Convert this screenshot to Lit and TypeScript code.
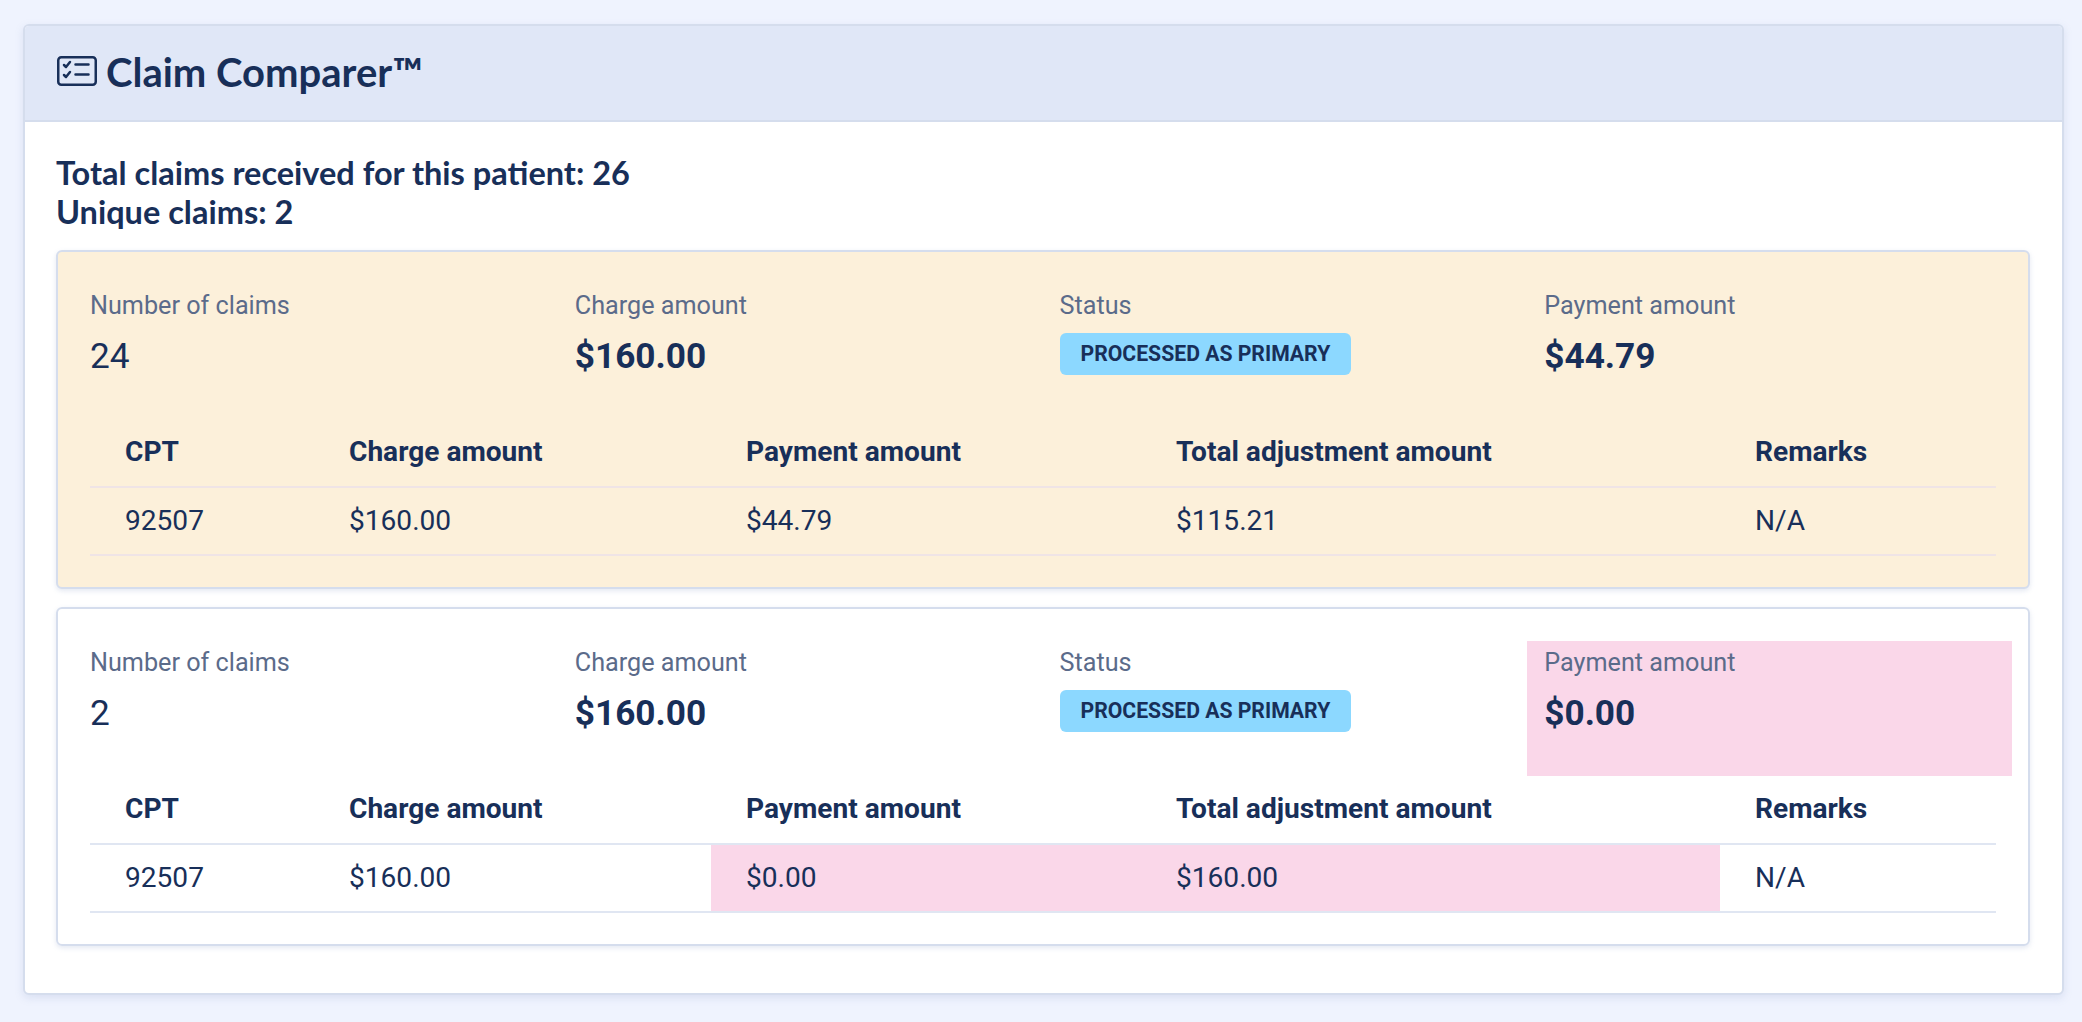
import { LitElement, html, css } from "lit";
import { customElement } from "lit/decorators.js";

interface Claim { count: string; tone: string; charge: string; pay: string; adj: string; flagged: boolean; }
const claims: Claim[] = [
  { count: "24", tone: "amber", charge: "$160.00", pay: "$44.79", adj: "$115.21", flagged: false },
  { count: "2", tone: "plain", charge: "$160.00", pay: "$0.00", adj: "$160.00", flagged: true },
];

@customElement("app-root")
export class AppRoot extends LitElement {
  static styles = css`
    :host { display: block; min-height: 1022px; background: #eff3fe; box-sizing: border-box; padding: 24px 18px 27px 23px; font-family: Roboto, sans-serif; color: #182f59; }
    * { box-sizing: border-box; }
    .panel { background: #fff; border: 2px solid #d5dded; border-radius: 6px; box-shadow: 0 3px 8px rgba(120,140,190,.18); height: 971px; overflow: hidden; }
    .head { height: 96px; background: #e0e7f7; border-bottom: 2px solid #d5dded; display: flex; align-items: center; gap: 9px; padding-left: 32px; padding-bottom: 5px; }
    .head svg { display: block; width: 40px; height: 30px; }
    h1 { margin: 3px 0 0; font: 700 40px/48px Lato, sans-serif; }
    .body { padding: 31px 32px 0 31px; }
    .sum { font: 700 32.5px/39px Lato, sans-serif; margin-bottom: 19px; height: 78px; }
    .claim { border: 2px solid #d5dded; border-radius: 6px; height: 339px; padding: 32px 32px 0 32px; margin-bottom: 18px; box-shadow: 0 2px 5px rgba(120,140,190,.2); }
    .claim.amber { background: #fcf0da; }
    .stats { display: grid; grid-template-columns: repeat(4, 484.75px); margin: 0 -17px; height: 135px; }
    .stat { padding: 8px 17px 0; }
    .stat.flag { background: #fad7e9; }
    .lbl { font-size: 25.2px; line-height: 28px; color: #5b6b8a; }
    .val { font-size: 35.2px; line-height: 38px; margin-top: 17px; }
    .val.b { font-weight: 700; }
    .badge { display: block; width: fit-content; margin-top: 13px; background: #8cd8ff; border-radius: 6px; padding: 0 21px; height: 42px; font-weight: 700; font-size: 21.2px; line-height: 42px; color: #182f59; }
    .tbl { display: grid; grid-template-columns: 224px 397px 430px 579px 276px; grid-template-rows: 69px 68px; font-size: 28.1px; }
    .cell { padding-left: 35px; line-height: 66px; border-bottom: 2px solid #e0e6f2; }
    .cell.h { font-weight: 700; }
    .amber .cell { border-color: #efe4e6; }
    .cell.flag { background: #fad7e9; }
  `;

  private claim(c: Claim) {
    const cols = ["CPT", "Charge amount", "Payment amount", "Total adjustment amount", "Remarks"];
    const row = ["92507", c.charge, c.pay, c.adj, "N/A"];
    return html`<section class="claim ${c.tone}">
      <div class="stats">
        <div class="stat"><div class="lbl">Number of claims</div><div class="val">${c.count}</div></div>
        <div class="stat"><div class="lbl">Charge amount</div><div class="val b">${c.charge}</div></div>
        <div class="stat"><div class="lbl">Status</div><span class="badge">PROCESSED AS PRIMARY</span></div>
        <div class="stat ${c.flagged ? "flag" : ""}"><div class="lbl">Payment amount</div><div class="val b">${c.pay}</div></div>
      </div>
      <div class="tbl">
        ${cols.map((t) => html`<div class="cell h">${t}</div>`)}
        ${row.map((t, i) => html`<div class="cell ${c.flagged && (i === 2 || i === 3) ? "flag" : ""}">${t}</div>`)}
      </div>
    </section>`;
  }

  render() {
    return html`<div class="panel">
      <header class="head">
        <svg viewBox="0 0 40 30" fill="none" stroke="#182f59" stroke-width="2.5" stroke-linecap="round" stroke-linejoin="round">
          <rect x="1.25" y="1.25" width="37.5" height="27.5" rx="3"/>
          <path d="M7 9l2 2 4-5M7 19l2 2 4-5M18.5 8.5h13M18.5 18.5h13"/>
        </svg>
        <h1>Claim Comparer™</h1>
      </header>
      <div class="body">
        <div class="sum">Total claims received for this patient: 26<br />Unique claims: 2</div>
        ${claims.map((c) => this.claim(c))}
      </div>
    </div>`;
  }
}
